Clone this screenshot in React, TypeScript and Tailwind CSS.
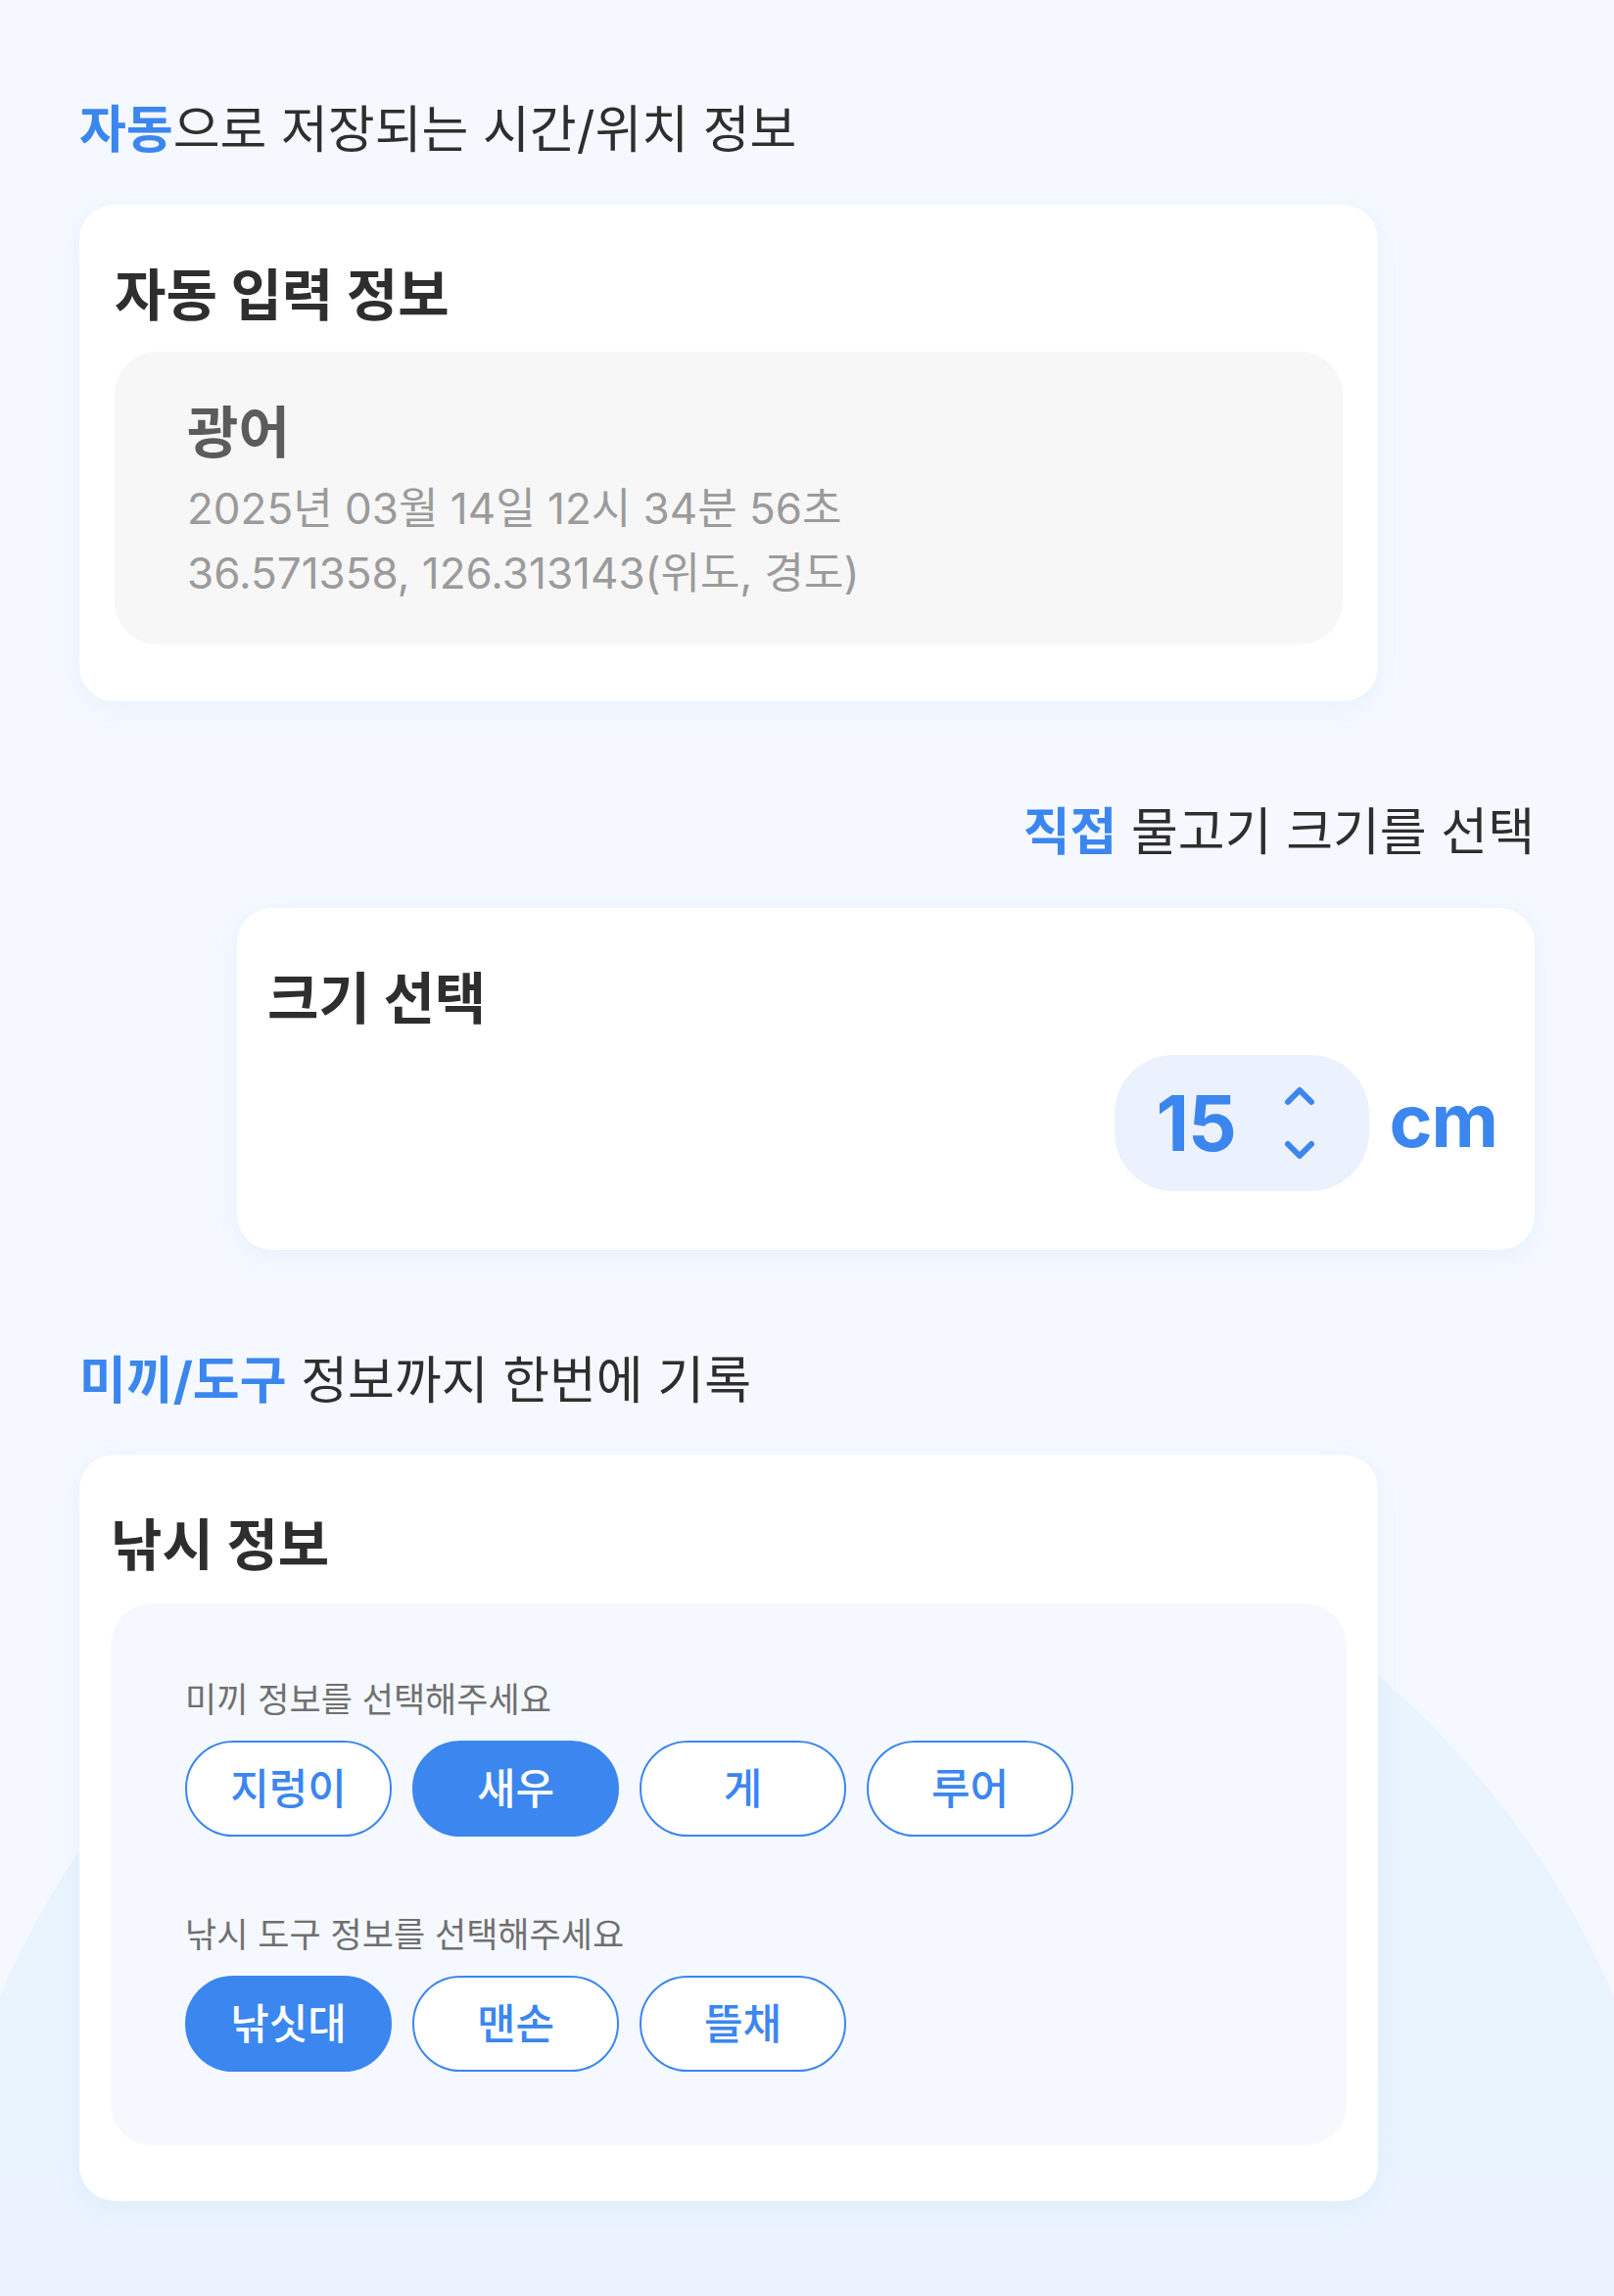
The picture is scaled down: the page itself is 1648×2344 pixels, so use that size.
const BLUE = "text-[#3b86ef]"

const baits = [
  { label: "지렁이", selected: false },
  { label: "새우", selected: true },
  { label: "게", selected: false },
  { label: "루어", selected: false },
]

const tools = [
  { label: "낚싯대", selected: true },
  { label: "맨손", selected: false },
  { label: "뜰채", selected: false },
]

function Chip({ label, selected }: { label: string; selected: boolean }) {
  return (
    <button
      className={`w-[211px] h-[98px] rounded-full border-2 border-[#3b86ef] text-[43px] leading-none font-medium flex items-center justify-center ${
        selected ? "bg-[#3b86ef] text-white" : "bg-white text-[#3b86ef]"
      }`}
    >
      {label}
    </button>
  )
}

function Stepper() {
  return (
    <div className="flex items-center gap-[20px]">
      <div className="h-[139px] w-[260px] rounded-[60px] bg-[#ebf2fd] flex items-center pl-[42px] pr-[53px] justify-between">
        <span className={`text-[78px] font-bold leading-none tracking-[-1px] ${BLUE}`}>15</span>
        <svg width="36" height="76" viewBox="0 0 36 76" fill="none" stroke="#3b86ef" strokeWidth={6} strokeLinecap="round" strokeLinejoin="round">
          <path d="M6 16 L18 4 L30 16" />
          <path d="M6 59 L18 71 L30 59" />
        </svg>
      </div>
      <span className={`text-[75px] font-bold leading-none pb-[6px] tracking-[-1px] ${BLUE}`}>cm</span>
    </div>
  )
}

export default function App() {
  return (
    <div className="relative min-h-[2344px] w-full overflow-hidden bg-[#f5f9ff] font-['Inter','Noto_Sans_CJK_KR',sans-serif] text-[#2e2e2e]">
      {/* soft background ellipse */}
      <div className="absolute left-[-73px] top-[1495px] w-[1794px] h-[2094px] rounded-full bg-gradient-to-b from-[#e9f4fe] to-[#edf4fe]" />

      <div className="relative flex flex-col px-[81px] pt-[98px] pb-[80px]">
        {/* Section 1 */}
        <h2 className="text-[52px] leading-[69px] font-normal">
          <span className={`font-bold ${BLUE}`}>자동</span>으로 저장되는 시간/위치 정보
        </h2>
        <div className="mt-[42px] w-[1326px] rounded-[36px] bg-white px-[36px] pt-[56px] pb-[58px] shadow-[0_6px_28px_rgba(90,140,220,0.08)]">
          <h3 className="text-[57px] leading-[74px] font-bold">자동 입력 정보</h3>
          <div className="mt-[20px] rounded-[44px] bg-[#f7f7f7] pl-[74px] pt-[46px] pb-[40px]">
            <div className="text-[57px] leading-[73px] font-bold text-[#5c5c5c]">광어</div>
            <div className="mt-[8px] text-[44px] leading-[66px] text-[#9b9b9b]">2025년 03월 14일 12시 34분 56초</div>
            <div className="text-[44px] leading-[66px] text-[#9b9b9b]">36.571358, 126.313143(위도, 경도)</div>
          </div>
        </div>

        {/* Section 2 */}
        <h2 className="mt-[99px] self-end text-[52px] leading-[69px] font-normal">
          <span className={`font-bold ${BLUE}`}>직접</span> 물고기 크기를 선택
        </h2>
        <div className="mt-[43px] self-end w-[1325px] rounded-[36px] bg-white pl-[31px] pr-[38px] pt-[56px] pb-[60px] shadow-[0_6px_28px_rgba(90,140,220,0.08)]">
          <h3 className="text-[57px] leading-[74px] font-bold">크기 선택</h3>
          <div className="mt-[20px] flex justify-end">
            <Stepper />
          </div>
        </div>

        {/* Section 3 */}
        <h2 className="mt-[99px] text-[52px] leading-[69px] font-normal">
          <span className={`font-bold ${BLUE}`}>미끼/도구</span> 정보까지 한번에 기록
        </h2>
        <div className="mt-[41px] w-[1326px] rounded-[36px] bg-white px-[32px] pt-[56px] pb-[57px] shadow-[0_6px_28px_rgba(90,140,220,0.08)]">
          <h3 className="text-[57px] leading-[74px] font-bold">낚시 정보</h3>
          <div className="mt-[22px] rounded-[42px] bg-[#f5f9ff] pl-[76px] pt-[75px] pb-[75px]">
            <p className="text-[35px] leading-[46px] text-[#707070]">미끼 정보를 선택해주세요</p>
            <div className="mt-[19px] flex gap-[21px]">
              {baits.map((b) => (
                <Chip key={b.label} label={b.label} selected={b.selected} />
              ))}
            </div>
            <p className="mt-[77px] text-[35px] leading-[46px] text-[#707070]">낚시 도구 정보를 선택해주세요</p>
            <div className="mt-[19px] flex gap-[21px]">
              {tools.map((t) => (
                <Chip key={t.label} label={t.label} selected={t.selected} />
              ))}
            </div>
          </div>
        </div>
      </div>
    </div>
  )
}
